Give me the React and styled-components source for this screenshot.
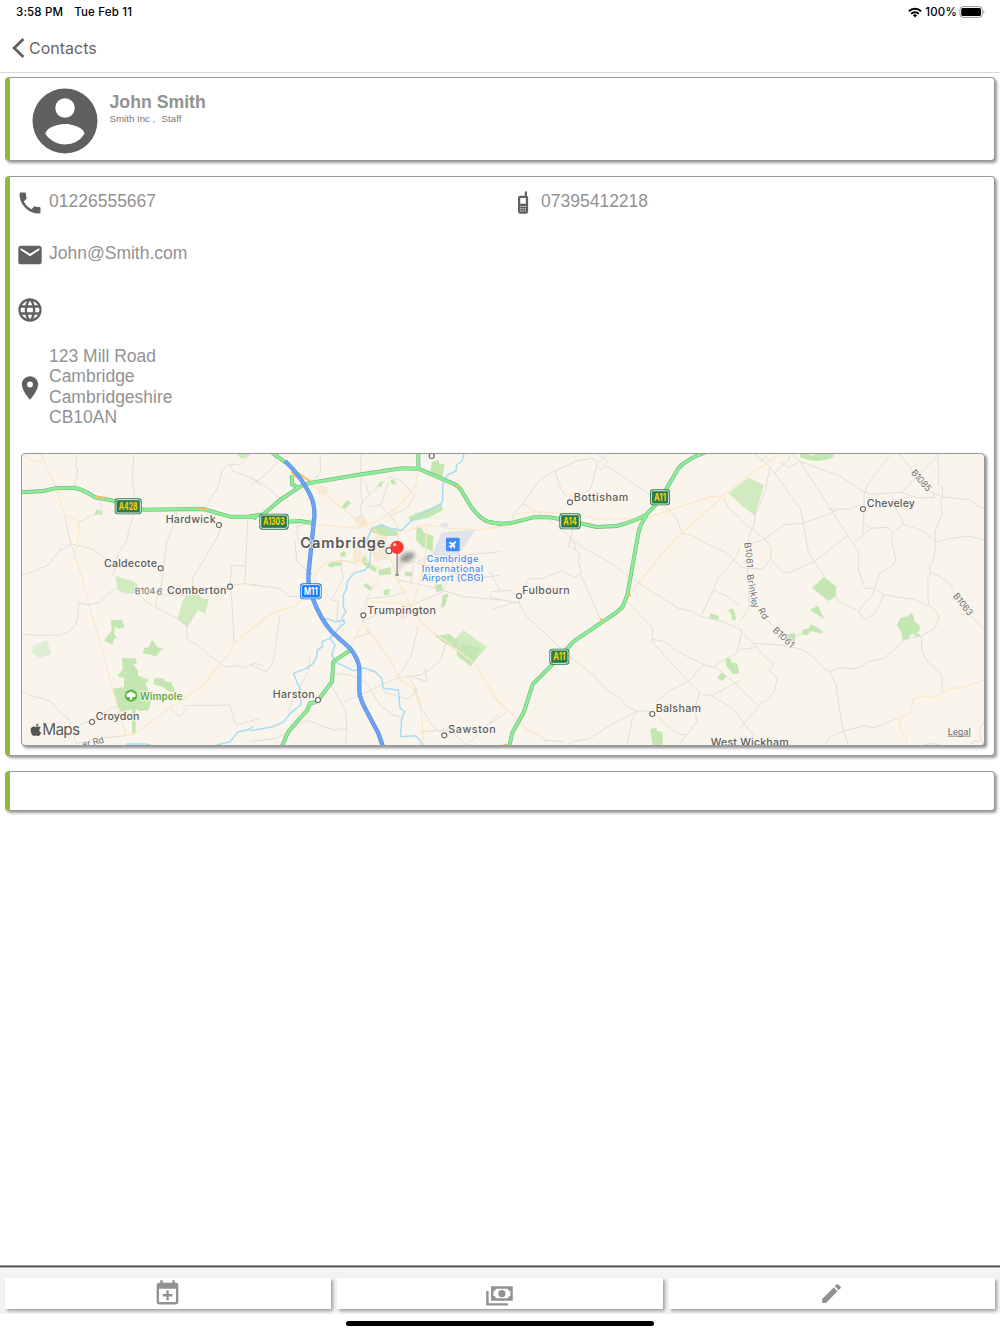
import React from 'react';
import styled, { createGlobalStyle } from 'styled-components';
import { MdPhone, MdEmail, MdLanguage, MdPlace, MdEdit } from 'react-icons/md';
import { FaApple, FaPlane } from 'react-icons/fa';

// The map is drawn at 3 units per pixel, in four strips placed side by side.
const strips = [
  {
    x: 0,
    pale: ['M98 604l42-20 14 44-36 10-22-16z'],
    fields: [
      'M710 27h38l-12 12-14 2z',
      'M346 392l50 16 18 12-4 24-36 2-22-14z',
      'M556 452l40-4 8 12 22 2-10 44-22-10-32 52-30-26 14-48z'
    ],
    parks: [
      'M332 526l34-2 8 22-16 6-12-6-4 18 8 14-8 4-4 18-26-14 24-30z',
      'M456 584l16 22 16 4-20 24-40-10 4-14 14-4z',
      'M366 638l42 2 2 16-10 2 14 20v14l32 12-10 12 6 14 10 44-6 22-28 2-8-6h-12l-34 10-12-20-16-50 36-6v-28l-20-4 16-20z',
      'M396 788h11v78h-11z',
      'M462 700l28 0 6 10 18 2 12 30-22-4-16-12-26-8z',
      'M284 206l6-12 14 4 2 10-10-4-6 6z'
    ],
    lanes: [
      'M122 27L134 52',
      'M232 27L227 65 233 75 224 125',
      'M401 27L397 110 402 140 401 205 378 290 355 325 348 360 338 392',
      'M193 210L212 296 224 326',
      'M66 388L85 386 145 360 180 314 186 316 212 296 275 312 345 358',
      'M238 232L275 210 308 208 300 165',
      'M66 568L110 571 180 570Q225 560 233 520L236 472 266 480 300 472 320 450 346 430',
      'M400 430L440 470 470 488 560 535 560 580 605 610 625 630 675 665 710 662 730 668 765 655 790 662',
      'M530 200L530 215 500 290 488 400 468 470 470 488',
      'M578 440L578 400 595 372 655 270 665 240',
      'M615 188L655 125 665 80 688 58 700 80 745 95 782 122',
      'M688 58L720 60 750 27',
      'M743 220L735 416 700 420M735 362L695 362 690 415 698 500 702 600',
      'M735 416L790 425',
      'M480 450L550 450 575 432 600 430 690 425',
      'M66 738L90 750 150 768 190 812 205 820 230 900',
      'M352 785L335 788 300 812 240 840 215 860',
      'M230 895L320 878 378 872',
      'M510 790L540 815 560 790 540 770M560 782L690 780 700 820 710 840 780 820'
    ],
    roads: [
      'M66 27L104 48 132 50 165 118 178 160 193 210 238 230 234 290 224 330 245 395 266 480 300 590 340 740 378 872',
      'M378 872L396 870 610 720 660 655 685 630 702 600 725 575 790 525'
    ],
    slips: ['M286 154L314 160', 'M590 189L622 193'],
    water: ['M378 897h60l14 3', 'M650 900L690 890 715 860 745 854 760 845'],
    trunks: ['M60 142L130 138 165 130 220 128Q240 130 260 142L285 157 345 168 385 184 430 194 610 192 690 215 755 215']
  },
  {
    x: 750,
    urban: ['M362 290l30-26 20 10-2 40 8 30-44 6-10-26z', 'M204 118l32 12-6 22-26-6z', 'M310 220l24-14 24 30-30 14z', 'M310 310l22-6 8 40-30 10z'],
    pink: ['M505 340l26-6v14l-26 6z', 'M440 510l20-6 14 10-16 12z'],
    airfield: ['M575 262l102-8-52 78-80 0z', 'M570 238l20-6 6 12-16 8z'],
    fields: ['M555 572l44-4 16 14 26-26 70 50-50 58-38-30-4-20z'],
    parks: [
      'M555 572l44-4 14 14 12 12-8 20-34-20z',
      'M622 610l12-14 62 14-32 52-42-30z',
      'M545 52l20-8 4 12 14 0-4 36-18 4-20-14z',
      'M380 124l12-14 8 0-6 16z',
      'M420 108l8-6 12 14-12 4z',
      'M274 188l18-24 10 10-16 18z',
      'M476 216L500 205 575 176 578 196 535 218 480 230z',
      'M365 250l30-12 50 22-5 12-30 2-44-12z',
      'M500 242l14 6 6 14 30 12-2 46-30-14-20-20z',
      'M232 358l30-12 14 2v12l-36 8z',
      'M270 324l16-4 2 14-14 2z',
      'M335 350l10-22 12 24 24 20-6 10-36-24z',
      'M385 374l38-8v22l-36 4z',
      'M464 380h20l4 14h-22z',
      'M340 422l10-8 18 14-10 8z',
      'M400 436l20-4-4 18-14 0z',
      'M555 420l20-4 4 20-20 6z',
      'M578 450l18-4-12 40-12 2z'
    ],
    lanes: [
      'M0 122L40 95 80 55 70 27',
      'M210 27L212 80 188 110',
      'M333 27L333 150 338 180',
      'M0 95L42 120 90 160',
      'M345 110L358 150 330 180 340 240',
      'M358 186L390 180 420 212 440 240 445 300',
      'M415 96L450 105 494 150 470 190 425 210M358 150L415 96M392 180L415 110',
      'M140 245L145 290 175 310M140 245L175 235',
      'M135 285L140 350 175 380',
      'M0 418L90 430 120 455 145 455',
      'M0 660L50 680 70 650 90 510',
      'M190 400L215 435 245 465M325 360L300 350 270 345 280 400 245 465 265 470 260 520 280 560',
      'M450 340L560 370 680 400 752 390',
      'M440 404L560 430 640 455 752 465',
      'M490 478L580 440 610 350 640 330 752 320',
      'M470 350L490 360 482 420',
      'M350 462L430 452 470 440M335 530L400 500 490 480',
      'M0 890L80 880 170 825 250 855 290 850M290 850L288 900M290 850L288 800 240 715',
      'M250 685L300 690 350 715 390 780 430 810 450 815',
      'M285 770L440 700 480 640 505 545',
      'M590 590L570 650 515 690 440 700M470 690L530 710 525 668',
      'M495 730L515 790 545 840 583 870M500 735L480 700',
      'M345 548L358 565 310 580M180 635L175 680 130 760 115 800',
      'M510 860L600 855 650 900M652 900L752 800',
      'M400 740L470 762 500 740'
    ],
    roads: [
      'M155 95L335 235 365 258',
      'M505 75L498 120 450 180 395 222 350 240 330 215',
      'M195 238L330 250 350 240',
      'M365 240L420 330 440 400 490 500 520 540 590 590 680 660 700 700 752 780',
      'M445 260L480 255 530 240 600 250 680 254 752 248',
      'M420 200L450 262 440 300',
      'M390 390L350 460 340 530 430 660 445 700 490 730 515 800 520 900',
      'M360 470L490 478 525 350 530 250',
      'M0 555L50 515 90 495 135 485 165 450 185 410Q190 385 230 350L300 350 365 350',
      'M365 258L340 290 350 350 390 370',
      'M340 535L305 600'
    ],
    slips: ['M140 82L180 108', 'M124 80L140 98', 'M618 120L630 126', 'M180 382L184 390'],
    water: [
      'M642 27L636 48 620 60 618 78 592 90 578 120 578 170 565 180 540 195 500 215 470 240 455 256 420 250 395 240 365 250 350 290 362 320 358 360 345 375 310 385 292 410 290 430 280 450 280 485 288 500 275 520 285 535 270 545 240 580 215 590 218 605 202 615 200 635 190 655 170 670 130 685 142 715 155 740 152 780 120 805 102 830 70 845 0 857',
      'M210 522h25l20 8 30-4',
      'M240 580L255 600 245 630 258 652 310 677 340 668 375 680 395 700 400 730 445 735 450 790 465 800 455 820 452 875 495 872 510 885 515 900'
    ],
    trunks: [
      'M0 214L40 208 90 165 155 122 175 115 335 88 455 70 505 71 610 116Q625 122 635 138L660 180Q685 218 712 229Q730 234 752 236',
      'M505 71L505 20',
      'M65 22L108 54',
      'M0 214L20 220M115 230L150 228 192 235',
      'M125 90L126 118 145 128',
      'M303 614L250 650 246 710 205 765 195 772 180 775 172 795 115 860 95 905'
    ],
    motorways: ['M105 48Q150 90 178 145Q195 175 193 215L176 380Q172 430 188 460Q210 520 245 560L300 610Q325 640 328 670L328 740Q330 760 345 790L385 865 399 905']
  },
  {
    x: 1470,
    fields: ['M714 145L752 117V177z'],
    parks: [
      'M660 505l26 8v12l-28-2z',
      'M714 494l16-4 6 18 2 18-12-2-2-16z',
      'M708 642l12-4 4 14 18 4 6 28-18 4-22-26z',
      'M695 682l16 12-14 14-16-10z',
      'M480 852l18-4 4 10 16 2v44h-30z'
    ],
    lanes: [
      'M65 220L72 205 100 175 150 103 195 78 260 48 305 40 322 52 318 72 305 120 300 135 250 160',
      'M195 78L212 130 230 155',
      'M98 175L165 215 275 305 365 355 410 390 565 490 610 500 630 514 700 530 750 553 758 557',
      'M318 60L335 74 352 50 345 40 325 30M325 50L345 40 350 27M345 65L365 72 505 165 560 220 577 265 605 270 655 300 710 322 732 345 750 308',
      'M250 250L240 285 235 305 255 312 270 330 265 350 275 382 255 398 215 378 160 400 115 402 100 435',
      'M240 285L258 297 255 312',
      'M0 380L30 435M0 495L80 470M5 440L60 435 85 455 90 480 105 510 240 635 310 690 355 738 385 755 412 785 440 798 485 798',
      'M5 440L0 458 90 475',
      'M270 385L335 530',
      'M412 470L487 548 487 590 595 710 635 748 665 752 735 715 752 705',
      'M487 583L525 590 560 618 640 658 675 668 690 650 740 625 745 605 755 560',
      'M440 800L425 830 412 900M440 798L345 850 300 880 250 890 235 900',
      'M500 770L540 735 595 710 640 660',
      'M500 810L530 840 560 865 590 870 565 900M590 870L620 830 615 790 628 740',
      'M665 752L720 785 750 815M675 665L735 715 752 730',
      'M0 835L50 800M160 885L220 890',
      'M752 220L715 190 700 158',
      'M732 345L755 367M732 345L685 400 670 435 632 515M670 435L705 450 752 483'
    ],
    roads: [
      'M65 220L85 205 130 200 210 204 285 212 320 222 460 222 560 188 660 156 695 154 752 112',
      'M418 450L525 315 575 265 695 158',
      'M-5 248L30 244 60 247',
      'M0 748L80 820 105 850 155 875 170 900'
    ],
    slips: ['M414 449L423 452', 'M331 520L338 530', 'M40 899h12'],
    water: [],
    trunks: [
      'M0 232L30 236 60 235 130 217 180 217 240 228 320 246 380 243Q425 232 468 210L510 165 565 70Q590 42 650 20',
      'M470 210Q450 240 445 265L412 450 398 485Q385 500 365 512L250 590 205 640 128 718 102 800 66 865 58 905'
    ]
  },
  {
    x: 2220,
    fields: ['M0 118L25 98 72 120 45 212 0 178z'],
    parks: [
      'M180 27h30l2 6 20-6h48v10q-50 22-100 0z',
      'M216 428l36-32 36 28v30l-22 14z',
      'M210 494l24-12 18 40z',
      'M142 568l22-4 2 8 18-6 4-12 20-4 2-12 14 4 24 16-4 8-30-8-12 12-28-2-8 10-2 24-12-2z',
      'M470 540l12-22 20-4 10-10 10 10v14l16 12 2 16-12 6 16 12-16 2-6-12-12 6-2 10-20 4-4-24z'
    ],
    lanes: [
      'M90 65L75 140 45 212 42 240 28 270 22 310 22 380 28 480 22 496 0 530M90 65L45 27M60 50L85 30',
      'M90 65L180 190 190 234 205 320 222 350 255 396',
      'M155 27L180 50 310 250 355 318 355 375 375 430 403 430',
      'M105 85L120 65 150 40 145 27M120 50L145 68 180 50 295 90 370 140 395 148 485 142 595 30',
      'M372 180L372 150 385 115 450 30',
      'M475 27L490 40 530 95 560 130 582 145 608 155 690 165 720 187 735 190',
      'M265 193L330 192 362 178',
      'M0 225L75 282 130 240 190 234 265 208 295 193M75 282L20 300',
      'M75 282L92 305 92 340 125 380 145 384 165 374 222 350 325 270',
      'M343 290L367 275 390 250 442 247 458 262 490 238 485 220 460 180 455 150',
      'M372 200L370 230 390 250M370 230L367 275',
      'M458 262L455 290 467 340 460 360 420 385 403 430 398 450 360 490 356 502 375 523 405 505 432 450 403 430',
      'M432 450L520 463 570 485 590 498 597 517 585 550 545 572 545 615 562 650 606 690 607 740',
      'M490 238L550 258 585 290 635 280 685 273 735 285',
      'M595 27L595 120 607 125 607 160 602 170 607 205 585 260 587 300 580 345 568 370 572 385 563 400 565 480',
      'M572 382L600 395 625 412 640 435M690 510L735 557',
      'M485 142L530 158 580 158 582 145',
      'M288 452L295 468 350 495',
      'M545 572L490 585 475 605 430 640 385 650 370 662 345 672 300 668 268 680',
      'M0 614L45 608M40 595L130 600 190 615 225 640 250 668 268 680 288 718 298 785 308 850 325 900',
      'M255 900L265 880 310 858 375 842 400 848 480 818',
      'M92 340L68 373 0 367M0 555L40 595 78 640 102 655 88 675 112 700 105 735 85 765 65 772 0 850',
      'M0 730L52 780M78 522L100 545M0 818L40 870V885',
      'M735 825L720 850 720 880 735 900M695 900L700 888 720 888M555 900L570 895 600 900'
    ],
    roads: [
      'M0 112L55 70 115 30',
      'M735 705L665 728 635 730 580 757 550 755 520 762 512 800 482 822 480 855 500 880 500 900'
    ],
    slips: [],
    water: [],
    trunks: []
  }
];

// x and y are the start of the baseline, w is the width of the text
const places = [
  { name: 'Hardwick', x: 497, y: 235, w: 150, dot: [657, 240] },
  { name: 'Caldecote', x: 312, y: 366, w: 159, dot: [482, 370] },
  { name: 'Comberton', x: 501, y: 447, w: 178, dot: [690, 425] },
  { name: 'Croydon', x: 287, y: 825, w: 131, dot: [276, 831] },
  { name: 'Trumpington', x: 1102, y: 506, w: 206, dot: [1090, 511] },
  { name: 'Harston', x: 818, y: 759, w: 126, dot: [954, 765] },
  { name: 'Sawston', x: 1345, y: 865, w: 142, dot: [1333, 871] },
  { name: 'Bottisham', x: 1721, y: 167, w: 164, dot: [1710, 172] },
  { name: 'Fulbourn', x: 1567, y: 447, w: 142, dot: [1557, 453] },
  { name: 'Balsham', x: 1967, y: 801, w: 136, dot: [1957, 807] },
  { name: 'West Wickham', x: 2132, y: 904, w: 234 },
  { name: 'Cheveley', x: 2600, y: 186, w: 145, dot: [2589, 192] }
];

const roadNames = [
  { name: 'B104', x: 404, y: 448, w: 62, angle: -1 },
  { name: '6', x: 468, y: 447, w: 16, angle: 14 },
  { name: 'er Rd', x: 249, y: 908, w: 66, angle: -13 },
  { name: 'B1085', x: 2732, y: 84, w: 76, angle: 49 },
  { name: 'B1061', x: 2233, y: 293, w: 76, angle: 84 },
  { name: 'Brinkl', x: 2240, y: 390, w: 76, angle: 79 },
  { name: 'ey', x: 2252, y: 465, w: 27, angle: 72 },
  { name: 'Rd', x: 2273, y: 495, w: 35, angle: 60 },
  { name: 'B1061', x: 2317, y: 557, w: 76, angle: 44 },
  { name: 'B1063', x: 2858, y: 453, w: 78, angle: 52 }
];

const shields = [
  { name: 'A428', x: 344, y: 160, w: 81 },
  { name: 'A1303', x: 778, y: 206, w: 88 },
  { name: 'M11', x: 900, y: 415, w: 65, motorway: true },
  { name: 'A14', x: 1678, y: 205, w: 64 },
  { name: 'A11', x: 1950, y: 133, w: 60 },
  { name: 'A11', x: 1648, y: 611, w: 60 }
];

const Layer = ({ kind, ...rest }) => (
  <g strokeLinejoin="round" {...rest}>
    {strips.map(strip => (
      <g key={strip.x} transform={`translate(${strip.x} 0)`}>
        {(strip[kind] || []).map(d => (
          <path key={d} d={d} />
        ))}
      </g>
    ))}
  </g>
);

const Map = () => (
  <MapFrame>
    <MapCanvas viewBox="66 27 2886 873" preserveAspectRatio="none">
      <defs>
        <filter id="soft" x="-50%" y="-50%" width="200%" height="200%">
          <feGaussianBlur stdDeviation="6" />
        </filter>
      </defs>
      <Layer kind="urban" fill="#f6ead5" />
      <Layer kind="pink" fill="#f8e6e2" />
      <Layer kind="airfield" fill="#e0e4ea" />
      <Layer kind="pale" fill="#dcefd3" />
      <Layer kind="fields" fill="#d2eabf" />
      <Layer kind="parks" fill="#c3e6b2" />
      <Layer kind="lanes" fill="none" stroke="#dfdbd4" strokeWidth="2.6" />
      <Layer kind="roads" fill="none" stroke="#fbe8c8" strokeWidth="4" />
      <Layer kind="water" fill="none" stroke="#a8dcf3" strokeWidth="4.5" />
      <Layer kind="trunks" fill="none" stroke="#7ab983" strokeWidth="12" />
      <Layer kind="trunks" fill="none" stroke="#8aee98" strokeWidth="8" />
      <Layer kind="slips" fill="none" stroke="#fbbf4d" strokeWidth="5" />
      <Layer kind="motorways" fill="none" stroke="#5b8fdc" strokeWidth="13" />
      <Layer kind="motorways" fill="none" stroke="#6ba4f8" strokeWidth="9" />

      {places.map(({ name, x, y, w, dot }) => (
        <g key={name}>
          {dot && <TownDot cx={dot[0]} cy={dot[1]} r="7.5" />}
          <Town x={x} y={y} textLength={w}>
            {name}
          </Town>
        </g>
      ))}
      <TownDot cx="1295" cy="33" r="7.5" />
      <TownDot cx="1167" cy="317" r="9" />
      <City x="901" y="308" textLength="255">
        Cambridge
      </City>
      {roadNames.map(({ name, x, y, w, angle }) => (
        <RoadName key={`${name}${x}`} textLength={w} transform={`translate(${x} ${y}) rotate(${angle})`}>
          {name}
        </RoadName>
      ))}

      {shields.map(({ name, x, y, w, motorway }) => (
        <g key={`${name}${x}`}>
          <rect x={x} y={y} width={w} height="48" rx="9" fill={motorway ? '#1f78f5' : '#2b7a4b'} />
          <rect x={x + 4} y={y + 4} width={w - 8} height="40" rx="6" fill="none" stroke="#fff" strokeWidth="2.6" />
          <ShieldText
            $motorway={motorway}
            x={x + 12}
            y={y + 35}
            textLength={w - 24}
            lengthAdjust="spacingAndGlyphs"
          >
            {name}
          </ShieldText>
        </g>
      ))}

      <rect x="1338" y="278" width="41" height="41" rx="4" fill="#3f8cf7" />
      <FaPlane x="1345" y="285" size="27" color="#fff" transform="rotate(-45 1358.5 298.5)" />
      <Airport x="1280" y="351" textLength="155">
        Cambridge
      </Airport>
      <Airport x="1265" y="380" textLength="184">
        International
      </Airport>
      <Airport x="1265" y="409" textLength="187">
        Airport (CBG)
      </Airport>

      <circle cx="393" cy="752" r="18.5" fill="#5fb646" />
      <path d="M393 740a8 8 0 0 1 8 5 6 6 0 0 1 0 12h-5v7h-6v-7h-5a6 6 0 0 1 0-12 8 8 0 0 1 8-5z" fill="#fff" />
      <ParkName x="419" y="764" textLength="128">
        Wimpole
      </ParkName>

      <ellipse cx="1222" cy="336" rx="24" ry="13" fill="#555" opacity=".6" filter="url(#soft)" transform="rotate(-22 1222 336)" />
      <path d="M1192 350l26-12-10 26-15 28z" fill="#777" opacity=".2" filter="url(#soft)" />
      <path d="M1191.5 322V389" stroke="#9c9c9c" strokeWidth="5" />
      <path d="M1186 390h11" stroke="#777" strokeWidth="4" />
      <circle cx="1191" cy="307" r="20" fill="#fc3a30" />
      <circle cx="1184" cy="299" r="5" fill="#ffd0cb" />

      <FaApple x="86" y="833" size="43" color="#545454" />
      <Brand x="127" y="871" textLength="113">
        Maps
      </Brand>
      <Legal x="2843" y="870" textLength="69">
        Legal
      </Legal>
      <path d="M2843 873.5h69" stroke="#777" strokeWidth="2.5" />
    </MapCanvas>
  </MapFrame>
);

const App = () => (
  <Screen>
    <GlobalStyle />
    <StatusBar>
      <span>3:58 PM</span>
      <span>Tue Feb 11</span>
      <Power>
        <svg width="14" height="11" viewBox="0 0 14 11">
          <g fill="none" stroke="#000" strokeWidth="2">
            <path d="M.9 4.3a8.7 8.7 0 0 1 12.2 0" />
            <path d="M3.2 6.8a5.4 5.4 0 0 1 7.6 0" />
          </g>
          <path d="M4.9 8.2a3 3 0 0 1 4.2 0L7 10.4z" />
        </svg>
        <span>100%</span>
        <svg width="26" height="12" viewBox="0 0 26 12">
          <rect x=".9" y=".6" width="22.4" height="10.8" rx="3" fill="none" stroke="#999" />
          <rect x="2.2" y="1.9" width="19.8" height="8.2" rx="1.6" />
          <path d="M24.4 4.2v3.6q1-.5 1-1.8t-1-1.8z" fill="#999" />
        </svg>
      </Power>
    </StatusBar>
    <Header>
      <svg width="13" height="20" viewBox="0 0 13 20">
        <path d="M11.4 1L2.2 10l9.2 9" fill="none" stroke="#606060" strokeWidth="2.8" />
      </svg>
      <span>Contacts</span>
    </Header>

    <Content>
      <ProfileCard>
        <svg width="78" height="78" viewBox="0 0 24 24" fill="#606060">
          <path d="M12 19.2c-2.5 0-4.71-1.28-6-3.2.03-2 4-3.1 6-3.1s5.97 1.1 6 3.1a7.23 7.23 0 0 1-6 3.2M12 5a3 3 0 0 1 3 3 3 3 0 0 1-3 3 3 3 0 0 1-3-3 3 3 0 0 1 3-3m0-3A10 10 0 0 0 2 12a10 10 0 0 0 10 10 10 10 0 0 0 10-10A10 10 0 0 0 12 2z" />
        </svg>
        <div>
          <Name>John Smith</Name>
          <Company>
            Smith Inc<span>,</span>Staff
          </Company>
        </div>
      </ProfileCard>

      <DetailsCard>
        <PhoneRow>
          <Detail>
            <MdPhone size={28} />
            <Value>01226555667</Value>
          </Detail>
          <Detail>
            <svg width="27" height="27" viewBox="0 0 24 24" fill="currentColor">
              <path d="M15 2a1 1 0 0 0-1 1v3h-4a2 2 0 0 0-2 2v12a2 2 0 0 0 2 2h5a2 2 0 0 0 2-2V8c0-.74-.4-1.38-1-1.72V3a1 1 0 0 0-1-1M10 8h5v5h-5V8m0 7h1v1h-1v-1m2 0h1v1h-1v-1m2 0h1v1h-1v-1m-4 2h1v1h-1v-1m2 0h1v1h-1v-1m2 0h1v1h-1v-1m-4 2h1v1h-1v-1m2 0h1v1h-1v-1m2 0h1v1h-1v-1z" />
            </svg>
            <Value>07395412218</Value>
          </Detail>
        </PhoneRow>
        <Detail>
          <MdEmail size={28} />
          <Value>John@Smith.com</Value>
        </Detail>
        <WebRow>
          <MdLanguage size={28} />
        </WebRow>
        <AddressRow>
          <MdPlace size={28} />
          <address>
            123 Mill Road
            <br />
            Cambridge
            <br />
            Cambridgeshire
            <br />
            CB10AN
          </address>
        </AddressRow>
        <Map />
      </DetailsCard>

      <EmptyCard />
    </Content>

    <Footer>
      <Action>
        <svg width="29" height="29" viewBox="0 0 24 24" fill="currentColor">
          <path d="M19 19V8H5v11h14M16 1h2v2h1a2 2 0 0 1 2 2v14a2 2 0 0 1-2 2H5a2 2 0 0 1-2-2V5a2 2 0 0 1 2-2h1V1h2v2h8V1m-5 8.5h2v3h3v2h-3v3h-2v-3H8v-2h3v-3z" />
        </svg>
      </Action>
      <Action>
        <svg width="29" height="29" viewBox="0 0 24 24" fill="currentColor">
          <path d="M5 6h18v12H5V6m9 3a3 3 0 0 1 3 3 3 3 0 0 1-3 3 3 3 0 0 1-3-3 3 3 0 0 1 3-3M9 8a2 2 0 0 1-2 2v4a2 2 0 0 1 2 2h10a2 2 0 0 1 2-2v-4a2 2 0 0 1-2-2H9m-8 2h2v10h16v2H1V10z" />
        </svg>
      </Action>
      <Action>
        <MdEdit size={25} />
      </Action>
    </Footer>
    <HomeArea>
      <HomeBar />
    </HomeArea>
  </Screen>
);

const GlobalStyle = createGlobalStyle`
  body {
    margin: 0;
    background: #fff;
  }
  * {
    box-sizing: border-box;
  }
  svg {
    display: block;
    flex: none;
  }
`;

const Screen = styled.div`
  display: flex;
  flex-direction: column;
  width: 1000px;
  height: 1334px;
  overflow: hidden;
  background: #fff;
  font-family: 'Liberation Sans', Arial, sans-serif;
  color: #929292;
`;

const StatusBar = styled.div`
  display: flex;
  align-items: center;
  gap: 11px;
  height: 24px;
  padding: 0 15px 0 16px;
  font: 500 11.5px/24px Inter, sans-serif;
  letter-spacing: 0.17px;
  color: #000;
`;

const Power = styled.div`
  display: flex;
  align-items: center;
  gap: 3px;
  margin-left: auto;
  span {
    margin-right: -1px;
  }
`;

const Header = styled.header`
  display: flex;
  align-items: center;
  gap: 4px;
  height: 49px;
  padding-left: 12px;
  border-bottom: 1px solid #d8d8d8;
  font: 400 16px/48px Inter, sans-serif;
  color: #666;
`;

const Content = styled.main`
  display: flex;
  flex-direction: column;
  flex: 1;
  gap: 15px;
  padding: 4px 5px 0;
`;

const Card = styled.section`
  flex: none;
  border: 1px solid #989898;
  border-left: 5px solid #8fb93f;
  border-radius: 4px;
  background: #fff;
  box-shadow: 2px 2px 3px rgba(0, 0, 0, 0.4);
`;

const ProfileCard = styled(Card)`
  display: flex;
  gap: 6px;
  height: 84px;
  padding: 4px 0 0 15.5px;
`;

const Name = styled.h1`
  margin: 10px 0 0;
  font-size: 17.7px;
  line-height: 20px;
`;

const Company = styled.div`
  font-size: 9.7px;
  line-height: 14px;
  color: #777;
  span {
    margin: 0 6.5px 0 2.5px;
  }
`;

const DetailsCard = styled(Card)`
  height: 580px;
  padding: 12px 9px 0 5.5px;
`;

const Detail = styled.div`
  display: flex;
  gap: 5.5px;
  height: 52px;
  color: #929292;
  svg {
    color: #606060;
  }
`;

const PhoneRow = styled.div`
  display: grid;
  grid-template-columns: 493px 1fr;
`;

const Value = styled.span`
  font-size: 17.5px;
  line-height: 25px;
`;

const WebRow = styled(Detail)`
  height: 51px;
  padding-top: 3px;
`;

const AddressRow = styled(Detail)`
  align-items: center;
  height: 85px;
  margin-bottom: 24px;
  svg {
    margin-top: 3px;
  }
  address {
    font-style: normal;
    font-size: 17.5px;
    line-height: 20.1px;
  }
`;

const MapFrame = styled.div`
  width: 964px;
  height: 293px;
  margin-left: 5.5px;
  overflow: hidden;
  border: 1px solid #989898;
  border-radius: 4px;
  background: #f9f5ed;
  box-shadow: 2px 2px 3px rgba(0, 0, 0, 0.45);
`;

const MapCanvas = styled.svg`
  width: 962px;
  height: 291px;
`;

const MapText = styled.text`
  font-family: Inter, sans-serif;
  paint-order: stroke;
  stroke: #fbf8f2;
  stroke-width: 5px;
  stroke-linejoin: round;
`;

const Town = styled(MapText)`
  font-size: 32px;
  font-weight: 500;
  fill: #5c5c5c;
`;

const City = styled(MapText)`
  font-size: 44px;
  font-weight: 600;
  fill: #595959;
`;

const RoadName = styled(MapText)`
  font-size: 27px;
  fill: #6b6b6b;
`;

const Airport = styled(MapText)`
  font-size: 27.5px;
  font-weight: 500;
  fill: #4a8cf0;
`;

const ParkName = styled(MapText)`
  font-size: 30px;
  font-weight: 600;
  fill: #5aac45;
`;

const Brand = styled(MapText)`
  font-size: 46px;
  fill: #5a5a5a;
`;

const Legal = styled(MapText)`
  font-size: 27px;
  font-weight: 500;
  fill: #777;
`;

const ShieldText = styled.text`
  font-family: Inter, sans-serif;
  font-size: 31px;
  font-weight: 700;
  fill: ${props => (props.$motorway ? '#fff' : '#fdd106')};
`;

const TownDot = styled.circle`
  fill: #fff;
  stroke: #666;
  stroke-width: 3.4px;
`;

const EmptyCard = styled(Card)`
  height: 40px;
`;

const Footer = styled.footer`
  display: grid;
  grid-template-columns: repeat(3, 1fr);
  gap: 6px;
  height: 49px;
  padding: 12px 5px 5px;
  border-top: 1px solid #9a9a9a;
  background: #f3f3f3;
  box-shadow: inset 0 1px #505050, inset 0 2px #b4b4b4;
`;

const Action = styled.button`
  display: flex;
  align-items: center;
  justify-content: center;
  height: 31px;
  padding: 0 1px 0 0;
  border: 0;
  background: #fff;
  color: #929292;
  box-shadow: 2px 2px 3px rgba(0, 0, 0, 0.35);
`;

const HomeArea = styled.div`
  display: flex;
  justify-content: center;
  position: relative;
  height: 20px;
  padding-top: 7px;
  background: #fff;
`;

const HomeBar = styled.div`
  width: 308px;
  height: 5px;
  border-radius: 3px;
  background: #000;
`;

export default App;
